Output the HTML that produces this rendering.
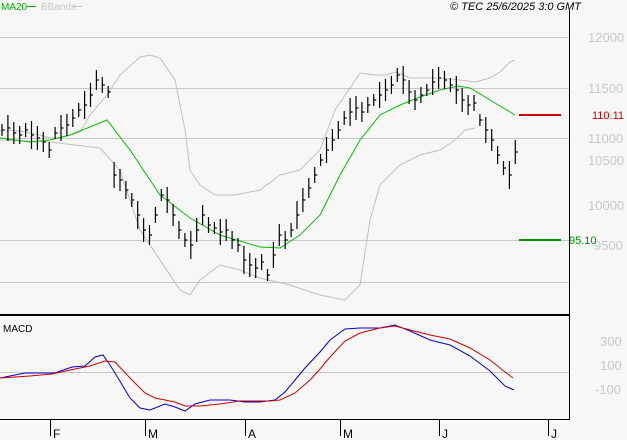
<!DOCTYPE html><html><head><style>
body{margin:0;background:#f7f7f7;width:627px;height:440px;overflow:hidden;font-family:"Liberation Sans",sans-serif}
svg{display:block}
</style></head><body>
<svg width="627" height="440" xmlns="http://www.w3.org/2000/svg" font-family="Liberation Sans, sans-serif">
<rect width="627" height="440" fill="#f7f7f7"/>
<g stroke="#c8c8c8" stroke-width="1">
<line x1="0" y1="37.5" x2="569" y2="37.5"/><line x1="0" y1="88.5" x2="569" y2="88.5"/><line x1="0" y1="138.5" x2="569" y2="138.5"/>
<line x1="0" y1="240.5" x2="569" y2="240.5"/><line x1="0" y1="282.5" x2="569" y2="282.5"/><line x1="0" y1="372.5" x2="569" y2="372.5"/>
</g>
<g fill="#c8c8c8" font-size="13">
<text x="588" y="42">12000</text><text x="588" y="93">11500</text><text x="588" y="143">11000</text>
<text x="588" y="165">10500</text><text x="588" y="210">10000</text><text x="594" y="250">9500</text>
<text x="600" y="346">300</text><text x="600" y="370">100</text><text x="595" y="394">-100</text>
</g>
<line x1="569.5" y1="10" x2="569.5" y2="420" stroke="#000"/>
<line x1="0" y1="315" x2="569" y2="315" stroke="#000" stroke-width="2"/>
<line x1="0" y1="419.5" x2="569" y2="419.5" stroke="#000"/>
<g stroke="#000"><line x1="50.5" y1="419" x2="50.5" y2="436"/><line x1="145.5" y1="419" x2="145.5" y2="436"/><line x1="245.5" y1="419" x2="245.5" y2="436"/><line x1="340.5" y1="419" x2="340.5" y2="436"/><line x1="439.5" y1="419" x2="439.5" y2="436"/><line x1="548.5" y1="419" x2="548.5" y2="436"/></g>
<g font-size="12" fill="#000"><text x="53" y="438">F</text><text x="148" y="438">M</text><text x="248" y="438">A</text><text x="343" y="438">M</text><text x="442" y="438">J</text><text x="551" y="438">J</text></g>
<text x="1" y="10" font-size="10" fill="#00b000">MA20</text><line x1="27" y1="6.5" x2="36" y2="6.5" stroke="#00b000"/>
<text x="41" y="10" font-size="10" fill="#c8c8c8">BBands</text><line x1="73" y1="6.5" x2="82" y2="6.5" stroke="#c8c8c8"/>
<text x="450" y="10" font-size="11" font-style="italic" fill="#000">© TEC 25/6/2025 3:0 GMT</text>
<text x="3" y="332" font-size="10" fill="#000">MACD</text>
<polyline fill="none" stroke="#c0c0c0" points="0,130 20,131 40,135 50,138 60,138 70,135 80,132 90,115 107,95 120,75 140,57 150,55 160,58 175,80 185,130 190,170 200,185 215,195 235,195 260,190 280,175 300,170 320,150 335,110 350,88 360,73 375,75 385,75 396,72 410,78 440,78 460,80 475,82 490,78 500,72 510,62 515,60"/>
<polyline fill="none" stroke="#c0c0c0" points="0,140 50,142 100,148 120,170 140,230 160,260 180,290 190,295 200,280 220,265 240,270 260,278 290,285 320,295 345,300 360,285 370,220 380,185 400,165 420,155 440,150 455,140 465,130 475,128"/>
<polyline fill="none" stroke="#00c000" points="0,138 30,142 50,140 70,135 107,120 130,150 160,195 190,218 220,235 260,247 280,248 300,235 320,215 340,175 360,140 380,115 400,105 420,97 440,90 458,86 470,88 490,100 515,115"/>
<g id="bars" stroke="#000" stroke-width="1.2"></g>
<line x1="519" y1="115" x2="561" y2="115" stroke="#d00000" stroke-width="2"/>
<text x="592" y="119" font-size="11" fill="#d00000">110.11</text>
<line x1="519" y1="240" x2="561" y2="240" stroke="#009000" stroke-width="2"/>
<text x="569" y="244" font-size="11" fill="#009000">95.10</text>
<polyline fill="none" stroke="#0000d0" points="0,378 25,373 55,373 72,367 85,366 95,357 103,355 110,365 118,378 130,398 140,408 150,410 165,404 175,407 185,411 195,404 210,400 230,400 245,402 260,402 275,400 285,392 295,380 305,368 320,352 330,340 345,329 360,328 380,328 395,325 410,331 430,340 450,345 470,356 490,371 505,386 514,390"/>
<polyline fill="none" stroke="#d00000" points="0,378 30,376 52,374 70,370 90,366 105,361 115,362 130,378 145,393 155,398 175,402 185,406 200,406 220,404 240,401 270,401 280,400 295,393 310,380 320,369 330,357 345,341 360,333 380,328 395,326 410,330 430,335 450,339 470,348 490,360 505,372 513,378"/>
</svg>
<script>
var c=[130,128,133,135,130,135,138,142,150,133,128,125,118,110,105,95,80,85,92,175,180,190,200,215,230,235,215,195,200,215,230,240,245,230,215,225,228,232,230,240,245,260,265,268,262,275,255,235,240,230,215,200,188,175,160,150,140,130,118,112,108,112,105,100,95,90,85,75,80,92,100,95,90,82,78,80,85,90,100,105,103,120,130,140,155,168,175,152];
var g=document.getElementById('bars'),s='';
for(var i=0;i<c.length;i++){var x=2+i*5.9,y=c[i],h=6+(i*7%9);
s+='<line x1="'+x+'" y1="'+(y-h)+'" x2="'+x+'" y2="'+(y+h)+'"/><line x1="'+x+'" y1="'+y+'" x2="'+(x+2.5)+'" y2="'+y+'"/>';}
g.innerHTML=s;
</script>
</body></html>
